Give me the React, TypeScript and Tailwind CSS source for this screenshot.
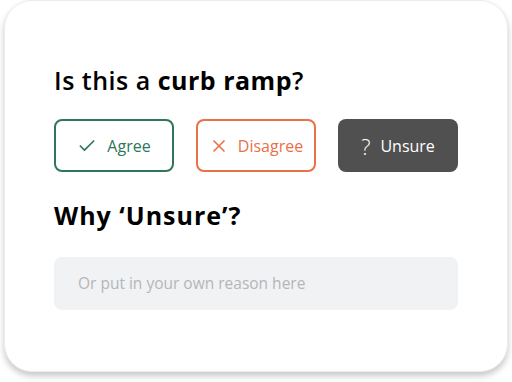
import { Check, X } from "lucide-react";

export default function App() {
    return (
        <div className="w-[512px] h-[382px] bg-white px-[4px] font-['Open_Sans',sans-serif]">
            <div className="h-[372px] rounded-[28px] bg-white border border-[#ececec] shadow-[0_4px_6px_rgba(0,0,0,0.22)] px-[49px] pt-[62px]">
                <h1 className="text-[25px] leading-[34px] text-black font-semibold tracking-[0.5px]">
                    Is this a <span className="font-bold">curb ramp</span>?
                </h1>

                <div className="flex gap-[22px] mt-[22px]">
                    <button className="w-[120px] h-[53px] rounded-[8px] border-2 border-[#2e7859] text-[#2e7859] flex items-center justify-center gap-[10px] text-[16px] font-medium">
                        <Check className="w-[20px] h-[20px]" strokeWidth={2} />
                        <span>Agree</span>
                    </button>
                    <button className="w-[120px] h-[53px] rounded-[8px] border-2 border-[#ea7048] text-[#ea7048] flex items-center justify-center gap-[9px] text-[16px] font-medium">
                        <X className="w-[20px] h-[20px]" strokeWidth={2} />
                        <span>Disagree</span>
                    </button>
                    <button className="w-[120px] h-[53px] rounded-[8px] bg-[#505050] text-white flex items-center justify-center gap-[10px] text-[16px] font-medium">
                        <span className="text-[22px] font-light leading-none">?</span>
                        <span>Unsure</span>
                    </button>
                </div>

                <h2 className="mt-[26px] text-[25px] leading-[34px] text-black font-bold tracking-[1px]">
                    Why ‘Unsure’?
                </h2>

                <div className="mt-[25px] h-[53px] rounded-[8px] bg-[#f1f2f4] flex items-center px-[24px] text-[15.5px] text-[#b4b6b8]">
                    Or put in your own reason here
                </div>
            </div>
        </div>
    );
}
